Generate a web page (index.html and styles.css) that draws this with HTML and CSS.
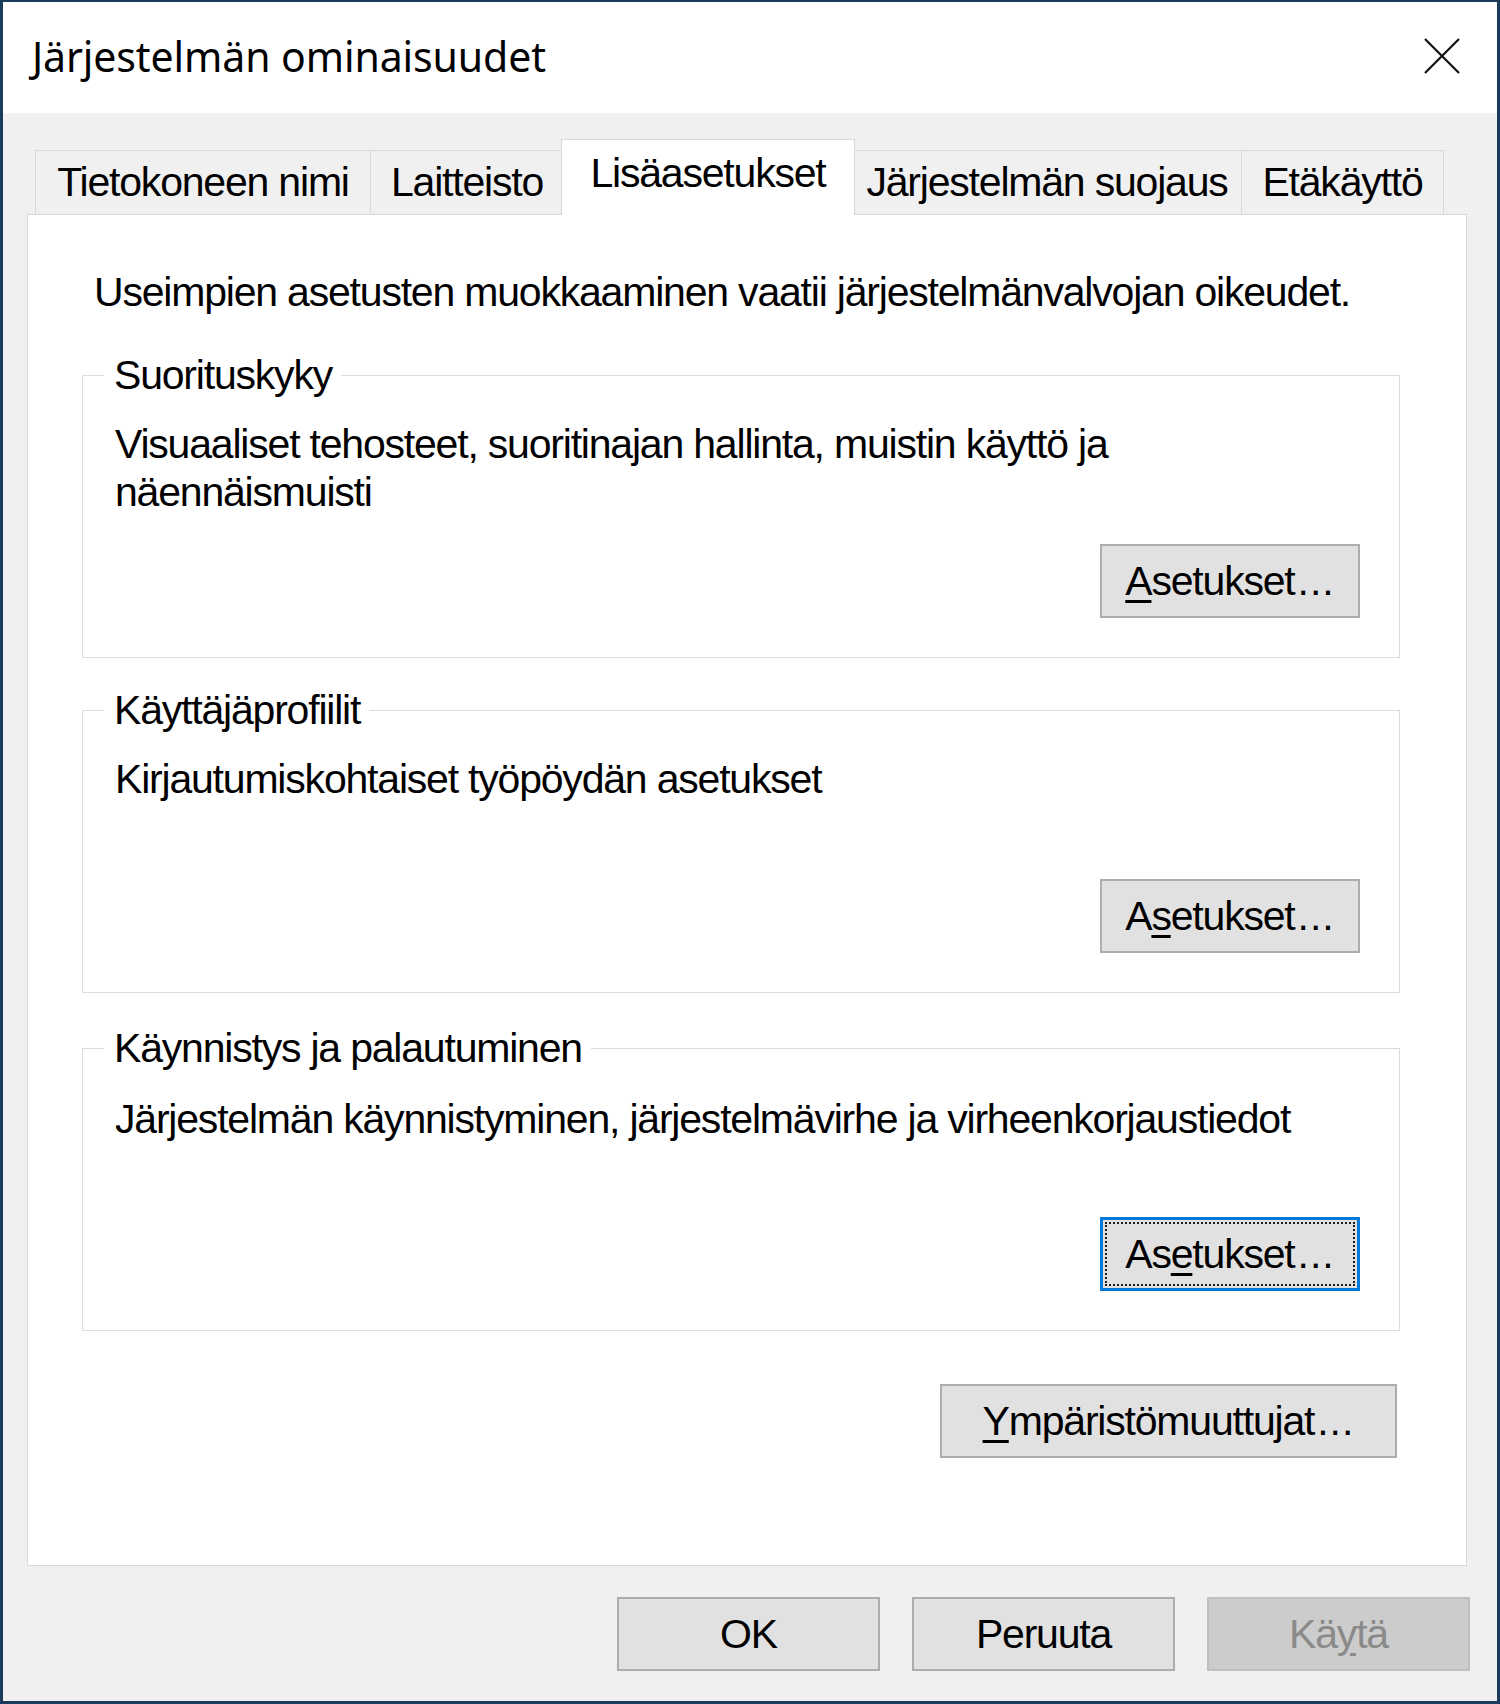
FILE: index.html
```html
<!DOCTYPE html>
<html lang="fi">
<head>
<meta charset="utf-8">
<title>Järjestelmän ominaisuudet</title>
<link rel="stylesheet" href="styles.css">
</head>
<body>
<div class="window">
  <div class="titlebar">
    <span class="title">Järjestelmän ominaisuudet</span>
    <span class="close" aria-label="Sulje">
      <svg width="38" height="38" viewBox="0 0 38 38"><path d="M2 2 L36 36 M36 2 L2 36" stroke="#111" stroke-width="2.2" fill="none"/></svg>
    </span>
  </div>
  <div class="client">
    <div class="tabs">
      <div class="tab tab-name">Tietokoneen nimi</div>
      <div class="tab tab-hw">Laitteisto</div>
      <div class="tab tab-adv selected">Lisäasetukset</div>
      <div class="tab tab-prot">Järjestelmän suojaus</div>
      <div class="tab tab-remote">Etäkäyttö</div>
    </div>
    <div class="panel">
      <p class="intro">Useimpien asetusten muokkaaminen vaatii järjestelmänvalvojan oikeudet.</p>

      <fieldset class="group">
        <legend>Suorituskyky</legend>
        <div class="group-body">
          <p class="desc">Visuaaliset tehosteet, suoritinajan hallinta, muistin käyttö ja<br>näennäismuisti</p>
          <button class="btn btn-group"><u>A</u>setukset<span class="dots">...</span></button>
        </div>
      </fieldset>

      <fieldset class="group group-mid">
        <legend>Käyttäjäprofiilit</legend>
        <div class="group-body">
          <p class="desc">Kirjautumiskohtaiset työpöydän asetukset</p>
          <button class="btn btn-group">A<u>s</u>etukset<span class="dots">...</span></button>
        </div>
      </fieldset>

      <fieldset class="group group-last">
        <legend>Käynnistys ja palautuminen</legend>
        <div class="group-body">
          <p class="desc">Järjestelmän käynnistyminen, järjestelmävirhe ja virheenkorjaustiedot</p>
          <button class="btn btn-group focused">As<u>e</u>tukset<span class="dots">...</span></button>
        </div>
      </fieldset>

      <div class="env-row">
        <button class="btn btn-env"><u>Y</u>mpäristömuuttujat<span class="dots">...</span></button>
      </div>
    </div>
    <div class="footer">
      <button class="btn btn-dlg">OK</button>
      <button class="btn btn-dlg">Peruuta</button>
      <button class="btn btn-dlg" disabled>Kä<u>y</u>tä</button>
    </div>
  </div>
</div>
</body>
</html>
```

FILE: styles.css
```css
* {
  box-sizing: border-box;
}

html, body {
  margin: 0;
  padding: 0;
  background: #f0f0f0;
}

.window {
  width: 1500px;
  height: 1704px;
  border: 3px solid #1b3b5c;
  border-top-width: 2px;
  display: flex;
  flex-direction: column;
  font-family: "Liberation Sans", Arial, sans-serif;
  font-size: 41px;
  letter-spacing: -1.2px;
  color: #000;
}

/* title bar */
.titlebar {
  height: 111px;
  background: #fff;
  display: flex;
  align-items: center;
  justify-content: space-between;
  padding: 0 36px 4px 29px;
}

.title {
  font-family: "Noto Sans", "Open Sans", sans-serif;
  font-size: 41px;
  letter-spacing: -0.1px;
  color: #000;
}

.close {
  display: flex;
  width: 38px;
  height: 38px;
}

/* client area */
.client {
  flex: 1;
  background: #f0f0f0;
  padding: 26px 30px 0 24px;
  display: flex;
  flex-direction: column;
}

.tabs {
  display: flex;
  align-items: flex-end;
  padding-left: 8px;
  height: 75px;
  position: relative;
  z-index: 1;
}

.tab {
  height: 64px;
  border: 1px solid #d9d9d9;
  border-bottom: none;
  background: #f0f0f0;
  display: flex;
  align-items: center;
  justify-content: center;
  margin-left: -1px;
  white-space: nowrap;
}

.tab:first-child {
  margin-left: 0;
}

.tab-name { width: 336px; }
.tab-hw { width: 194px; }
.tab-adv { width: 294px; }
.tab-prot { width: 390px; }
.tab-remote { width: 203px; }

.tab.selected {
  height: 76px;
  margin: 0 -2px -1px -3px;
  background: #fff;
  padding-bottom: 8px;
  position: relative;
}

.panel {
  height: 1352px;
  background: #fff;
  border: 1px solid #d9d9d9;
  padding: 53px 0 0 54px;
}

.intro {
  margin: 0 0 35px;
  padding-left: 12px;
  line-height: 48px;
}

/* group boxes */
.group {
  width: 1318px;
  height: 307px;
  margin: 0 0 28px;
  padding: 0 39px 39px 0;
  border: 1px solid #dcdcdc;
  min-width: 0;
}

.group-mid {
  margin-bottom: 31px;
}

.group legend {
  margin-left: 21px;
  padding: 0 9px 0 10px;
  line-height: 48px;
}

.group-body {
  height: 100%;
  display: flex;
  flex-direction: column;
  padding: 21px 0 0 32px;
}

.group-last .group-body {
  padding-top: 23px;
}

.desc {
  margin: 0;
  line-height: 48px;
  white-space: nowrap;
}

/* buttons */
.btn {
  font-family: inherit;
  font-size: 41px;
  letter-spacing: -1.2px;
  color: #000;
  background: #e1e1e1;
  border: 2px solid #adadad;
  height: 74px;
  padding: 0;
  line-height: 1;
  position: relative;
}

.btn u {
  text-decoration-thickness: 3px;
  text-underline-offset: 5px;
}

.btn .dots {
  margin-left: 3px;
  letter-spacing: 1px;
}

.btn-group {
  width: 260px;
  align-self: flex-end;
  margin-top: auto;
}

.btn.focused {
  border: 3px solid #0078d7;
}

.btn.focused::after {
  content: "";
  position: absolute;
  inset: 2px;
  border: 2px dotted #1a1a1a;
}

.env-row {
  display: flex;
  justify-content: flex-end;
  width: 1318px;
  margin-top: 53px;
  padding-right: 3px;
}

.btn-env {
  width: 457px;
}

.footer {
  display: flex;
  justify-content: flex-end;
  gap: 32px;
  padding-top: 31px;
  margin-right: -3px;
}

.btn-dlg {
  width: 263px;
}

.btn:disabled {
  background: #cccccc;
  border-color: #bfbfbf;
  color: #8a8a8a;
}
```
